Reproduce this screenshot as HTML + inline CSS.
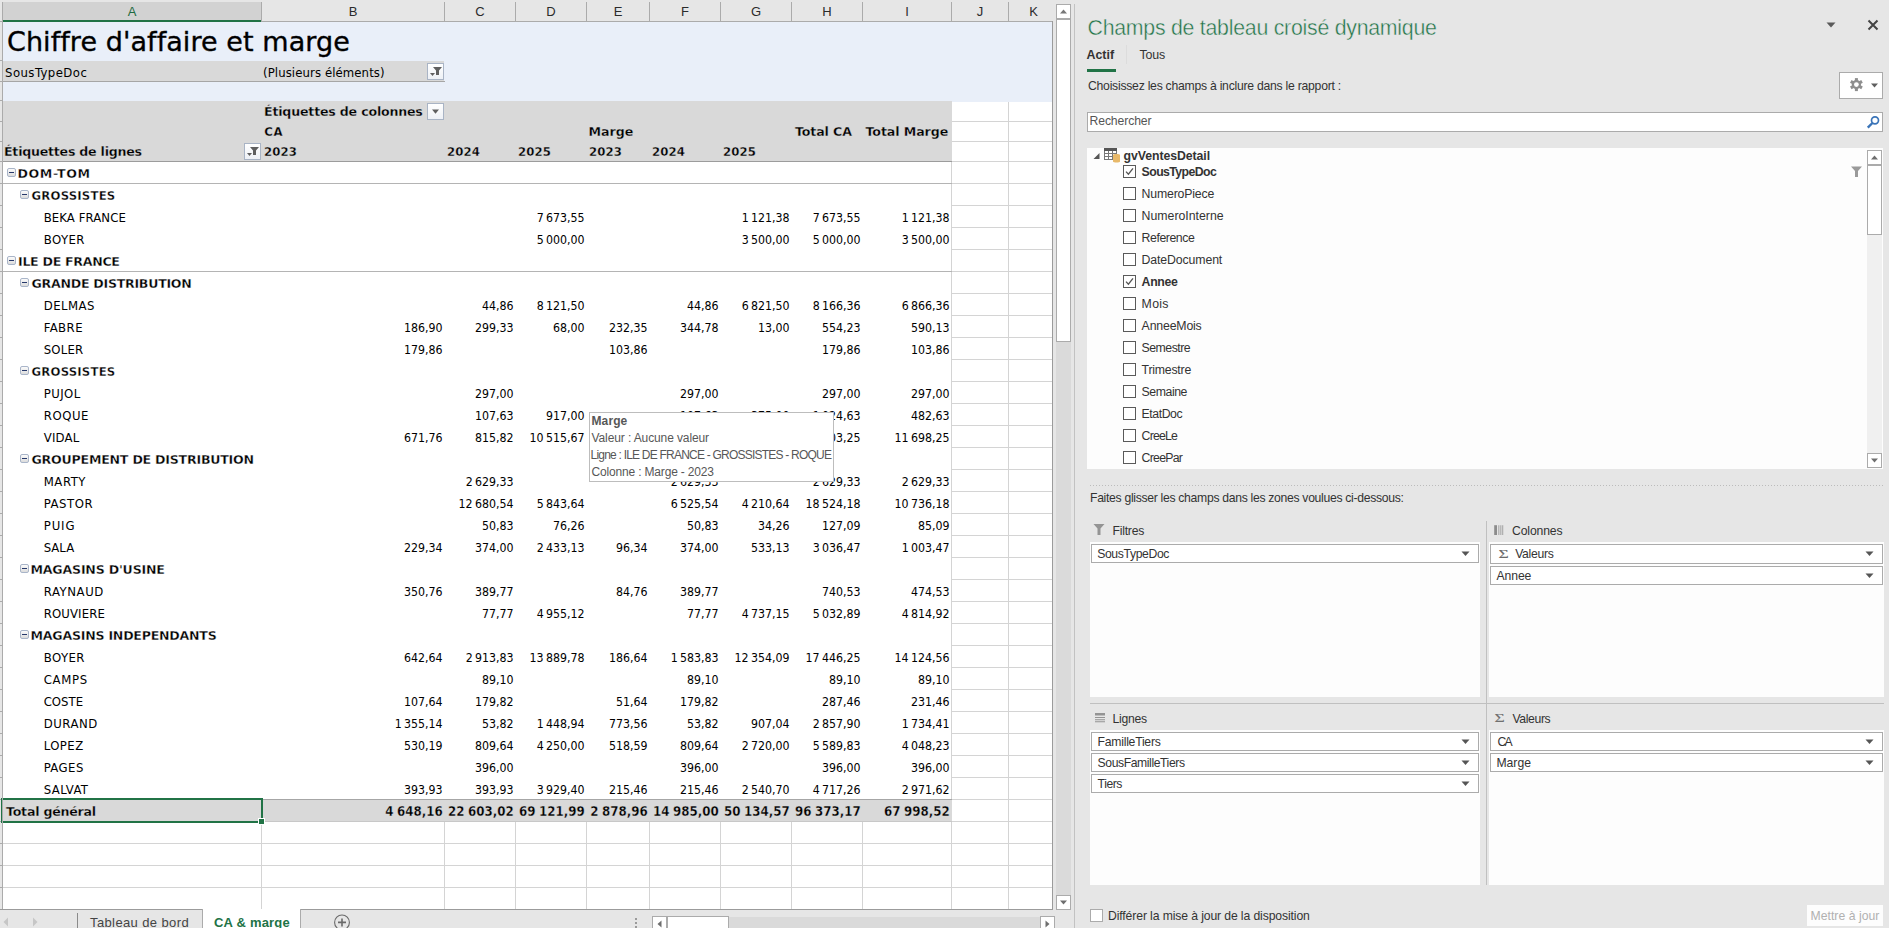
<!DOCTYPE html><html lang="fr"><head><meta charset="utf-8"><title>Chiffre d'affaire et marge</title><style>html,body{margin:0;padding:0}
body{width:1889px;height:928px;overflow:hidden;background:#e6e6e6;font-family:"DejaVu Sans Condensed","DejaVu Sans","Liberation Sans",sans-serif;font-stretch:condensed;font-size:13px;color:#000}
#app{position:relative;width:1889px;height:928px;overflow:hidden;background:#e6e6e6}
#app div,.abs{position:absolute}
#sheet{left:0;top:0;width:1053px;height:910px;background:#fff;overflow:hidden}
.fill.blue{background:#e9eff9}
.fill.gray{background:#d9d9d9}
.hl{height:1px}
.vl{width:1px}
.g{background:#d4d4d4}
#colhdr{left:0;top:0;width:1053px;height:22px;background:#e6e6e6;border-bottom:1px solid #ababab;box-sizing:border-box}
.ch{top:2px;height:19px;text-align:center;color:#2b2b2b;font-size:13px;line-height:20px;font-family:"Liberation Sans",sans-serif}
.ch.sel{background:#d2d2d2;color:#1e6b41;height:18px;border-bottom:2px solid #217346}
.chsep{top:2px;width:1px;height:19px;background:#ababab}
#rowstrip{left:0;top:22px;width:2px;height:888px;background:#e6e6e6}
.t{white-space:pre;height:22px;line-height:22px;font-size:13px}
.t.h20{height:20px;line-height:20px}
.t.h21{height:21px;line-height:21px}
.t.title{font-family:"DejaVu Sans","Liberation Sans",sans-serif;font-stretch:normal;font-size:27px;-webkit-text-stroke:0.35px #000}
.t.b{font-weight:bold;font-size:13px;-webkit-text-stroke:0.3px #fff}
.t.b.bx{font-family:"DejaVu Sans","Liberation Sans",sans-serif;font-stretch:normal;font-size:12.6px}
.t.b.h20,.t.b.gr{-webkit-text-stroke:0.3px #d9d9d9}
.t.n{text-align:right;font-size:12.25px;word-spacing:-1.1px}
.t.nb{text-align:right;font-weight:bold;font-size:13.2px;word-spacing:-0.5px;-webkit-text-stroke:0.3px #d9d9d9}
.fbtn{width:15px;height:15px;border:1px solid #a9b4c5;background:linear-gradient(#fff,#eef1f6);overflow:hidden}
.fbtn svg{position:absolute;left:-1px;top:-1px}
.pm{width:7px;height:7px;border:1px solid #a9b5c9;border-radius:2px;background:linear-gradient(#fbfbfb,#dcdcdc)}
.pm i{position:absolute;left:1px;top:3px;width:5px;height:1px;background:#27396b}
#selbox{left:1px;top:798px;width:258px;height:21px;border:2px solid #217346}
#selhandle{left:258px;top:818px;width:5px;height:5px;background:#217346;border:1px solid #fff}
#tip{left:589px;top:412px;width:243px;height:68px;border:1px solid #bdbdbd;background:#fff;color:#575757;font-family:"Liberation Sans",sans-serif}
.tl{white-space:pre;font-size:12px;line-height:17px;height:17px;color:#575757}
.tl.b{font-weight:bold}
#vsb{left:1056px;top:0;width:15px;height:910px}
.sbtn{background:#fff;border:1px solid #ababab}
.sbtn svg{position:absolute;left:0;top:0}
.track{background:#dadada}
.track2{background:#f0f0f0}
.thumb{background:#fff;border:1px solid #ababab}
#tabbar{left:0;top:910px;width:1074px;height:18px;background:#e6e6e6}
.tab{top:0;height:18px;border-right:1px solid #ababab}
.tab.act{background:#fff;top:-1px;height:19px;border-left:1px solid #ababab;border-right:1px solid #ababab}
.tabt{white-space:pre;font-family:"Liberation Sans",sans-serif;font-size:13px;color:#444;line-height:18px;height:18px;top:0}
.tabt.act{color:#217346;font-weight:bold}
.dots{width:2px;height:12px;background:repeating-linear-gradient(#9a9a9a 0 2px,transparent 2px 4px)}
#pane{left:0;top:0;width:1889px;height:928px;font-family:"Liberation Sans",sans-serif;color:#3b3b3b}
.ptitle{font-size:21.3px;color:#217346;-webkit-text-stroke:0.42px #e6e6e6;white-space:pre;line-height:28px}
.pt{white-space:pre;font-size:12.2px;line-height:16px;color:#333}
.pt.f12{font-size:12.3px}
.pt.b{font-weight:bold}
.pt.ptab{font-size:12.4px}
.pt.srch{color:#555}
.pt.updt{color:#b1b1b1}
.gear{width:42px;height:25px;background:#fff;border:1px solid #ababab}
.search{background:#fff;border:1px solid #ababab}
.white{background:#fdfdfd}
.cb{width:11px;height:11px;border:1px solid #5a5a5a;background:#fff}
.cb svg{position:absolute;left:0;top:0}
.dotline{height:1px;background:repeating-linear-gradient(90deg,#bcbcbc 0 1px,transparent 1px 3px)}
.zi{height:17px;border:1px solid #ababab;background:#fff}
.zi .sig2{position:absolute;left:8px;top:0;font-family:"Liberation Serif",serif;font-size:16px;line-height:18px;color:#6a6a6a;-webkit-text-stroke:0.12px #6a6a6a;transform:scale(1.1,0.84);transform-origin:50% 55%}
.sig{font-family:"Liberation Serif",serif;font-size:16px;color:#707070;-webkit-text-stroke:0.12px #707070;transform:scale(1.1,0.82);transform-origin:50% 50%}
.upd{background:#fdfdfd}
</style></head><body>
<div id="app">
<div id="sheet">
<div class="fill blue" style="left:3px;top:22px;width:1049px;height:79px"></div>
<div class="fill gray" style="left:3px;top:61px;width:441px;height:20px"></div>
<div class="hl" style="left:3px;top:81px;width:442px;background:#a6a6a6"></div>
<div class="fill gray" style="left:3px;top:101px;width:949px;height:60px"></div>
<div class="hl" style="left:3px;top:161px;width:949px;background:#9c9c9c"></div>
<div class="hl g" style="left:952px;top:121px;width:100px"></div>
<div class="hl g" style="left:952px;top:141px;width:100px"></div>
<div class="hl g" style="left:952px;top:161px;width:100px"></div>
<div class="hl g" style="left:952px;top:183px;width:100px"></div>
<div class="hl g" style="left:952px;top:205px;width:100px"></div>
<div class="hl g" style="left:952px;top:227px;width:100px"></div>
<div class="hl g" style="left:952px;top:249px;width:100px"></div>
<div class="hl g" style="left:952px;top:271px;width:100px"></div>
<div class="hl g" style="left:952px;top:293px;width:100px"></div>
<div class="hl g" style="left:952px;top:315px;width:100px"></div>
<div class="hl g" style="left:952px;top:337px;width:100px"></div>
<div class="hl g" style="left:952px;top:359px;width:100px"></div>
<div class="hl g" style="left:952px;top:381px;width:100px"></div>
<div class="hl g" style="left:952px;top:403px;width:100px"></div>
<div class="hl g" style="left:952px;top:425px;width:100px"></div>
<div class="hl g" style="left:952px;top:447px;width:100px"></div>
<div class="hl g" style="left:952px;top:469px;width:100px"></div>
<div class="hl g" style="left:952px;top:491px;width:100px"></div>
<div class="hl g" style="left:952px;top:513px;width:100px"></div>
<div class="hl g" style="left:952px;top:535px;width:100px"></div>
<div class="hl g" style="left:952px;top:557px;width:100px"></div>
<div class="hl g" style="left:952px;top:579px;width:100px"></div>
<div class="hl g" style="left:952px;top:601px;width:100px"></div>
<div class="hl g" style="left:952px;top:623px;width:100px"></div>
<div class="hl g" style="left:952px;top:645px;width:100px"></div>
<div class="hl g" style="left:952px;top:667px;width:100px"></div>
<div class="hl g" style="left:952px;top:689px;width:100px"></div>
<div class="hl g" style="left:952px;top:711px;width:100px"></div>
<div class="hl g" style="left:952px;top:733px;width:100px"></div>
<div class="hl g" style="left:952px;top:755px;width:100px"></div>
<div class="hl g" style="left:952px;top:777px;width:100px"></div>
<div class="hl g" style="left:952px;top:799px;width:100px"></div>
<div class="hl g" style="left:952px;top:821px;width:100px"></div>
<div class="hl g" style="left:952px;top:843px;width:100px"></div>
<div class="hl g" style="left:952px;top:865px;width:100px"></div>
<div class="hl g" style="left:952px;top:887px;width:100px"></div>
<div class="vl g" style="left:951px;top:162px;height:747px"></div>
<div class="vl g" style="left:1008px;top:102px;height:807px"></div>
<div class="fill blue" style="left:952px;top:101px;width:100px;height:1px"></div>
<div class="hl g" style="left:3px;top:843px;width:949px"></div>
<div class="hl g" style="left:3px;top:865px;width:949px"></div>
<div class="hl g" style="left:3px;top:887px;width:949px"></div>
<div class="vl g" style="left:261px;top:822px;height:87px"></div>
<div class="vl g" style="left:444px;top:822px;height:87px"></div>
<div class="vl g" style="left:515px;top:822px;height:87px"></div>
<div class="vl g" style="left:586px;top:822px;height:87px"></div>
<div class="vl g" style="left:649px;top:822px;height:87px"></div>
<div class="vl g" style="left:720px;top:822px;height:87px"></div>
<div class="vl g" style="left:791px;top:822px;height:87px"></div>
<div class="vl g" style="left:862px;top:822px;height:87px"></div>
<div class="fill gray" style="left:3px;top:800px;width:949px;height:21px"></div>
<div class="hl" style="left:3px;top:799px;width:949px;background:#a6a6a6"></div>
<div class="hl" style="left:3px;top:821px;width:949px;background:#c8c8c8"></div>
<div class="hl" style="left:3px;top:183px;width:949px;background:#b4b4b4"></div>
<div class="hl" style="left:3px;top:271px;width:949px;background:#b4b4b4"></div>
<div id="colhdr">
<div class="ch sel" style="left:3px;width:258px"><span>A</span></div>
<div class="chsep" style="left:261px"></div>
<div class="ch" style="left:262px;width:182px"><span>B</span></div>
<div class="chsep" style="left:444px"></div>
<div class="ch" style="left:445px;width:70px"><span>C</span></div>
<div class="chsep" style="left:515px"></div>
<div class="ch" style="left:516px;width:70px"><span>D</span></div>
<div class="chsep" style="left:586px"></div>
<div class="ch" style="left:587px;width:62px"><span>E</span></div>
<div class="chsep" style="left:649px"></div>
<div class="ch" style="left:650px;width:70px"><span>F</span></div>
<div class="chsep" style="left:720px"></div>
<div class="ch" style="left:721px;width:70px"><span>G</span></div>
<div class="chsep" style="left:791px"></div>
<div class="ch" style="left:792px;width:70px"><span>H</span></div>
<div class="chsep" style="left:862px"></div>
<div class="ch" style="left:863px;width:88px"><span>I</span></div>
<div class="chsep" style="left:951px"></div>
<div class="ch" style="left:952px;width:56px"><span>J</span></div>
<div class="chsep" style="left:1008px"></div>
<div class="ch" style="left:1009px;width:43px;padding-left:3px"><span>K</span></div>
</div>
<div id="rowstrip"></div>
<div class="hl" style="left:0;top:21px;width:2px;background:#ababab"></div>
<div class="hl" style="left:0;top:60px;width:2px;background:#ababab"></div>
<div class="hl" style="left:0;top:81px;width:2px;background:#ababab"></div>
<div class="hl" style="left:0;top:100px;width:2px;background:#ababab"></div>
<div class="hl" style="left:0;top:121px;width:2px;background:#ababab"></div>
<div class="hl" style="left:0;top:141px;width:2px;background:#ababab"></div>
<div class="hl" style="left:0;top:161px;width:2px;background:#ababab"></div>
<div class="hl" style="left:0;top:183px;width:2px;background:#ababab"></div>
<div class="hl" style="left:0;top:205px;width:2px;background:#ababab"></div>
<div class="hl" style="left:0;top:227px;width:2px;background:#ababab"></div>
<div class="hl" style="left:0;top:249px;width:2px;background:#ababab"></div>
<div class="hl" style="left:0;top:271px;width:2px;background:#ababab"></div>
<div class="hl" style="left:0;top:293px;width:2px;background:#ababab"></div>
<div class="hl" style="left:0;top:315px;width:2px;background:#ababab"></div>
<div class="hl" style="left:0;top:337px;width:2px;background:#ababab"></div>
<div class="hl" style="left:0;top:359px;width:2px;background:#ababab"></div>
<div class="hl" style="left:0;top:381px;width:2px;background:#ababab"></div>
<div class="hl" style="left:0;top:403px;width:2px;background:#ababab"></div>
<div class="hl" style="left:0;top:425px;width:2px;background:#ababab"></div>
<div class="hl" style="left:0;top:447px;width:2px;background:#ababab"></div>
<div class="hl" style="left:0;top:469px;width:2px;background:#ababab"></div>
<div class="hl" style="left:0;top:491px;width:2px;background:#ababab"></div>
<div class="hl" style="left:0;top:513px;width:2px;background:#ababab"></div>
<div class="hl" style="left:0;top:535px;width:2px;background:#ababab"></div>
<div class="hl" style="left:0;top:557px;width:2px;background:#ababab"></div>
<div class="hl" style="left:0;top:579px;width:2px;background:#ababab"></div>
<div class="hl" style="left:0;top:601px;width:2px;background:#ababab"></div>
<div class="hl" style="left:0;top:623px;width:2px;background:#ababab"></div>
<div class="hl" style="left:0;top:645px;width:2px;background:#ababab"></div>
<div class="hl" style="left:0;top:667px;width:2px;background:#ababab"></div>
<div class="hl" style="left:0;top:689px;width:2px;background:#ababab"></div>
<div class="hl" style="left:0;top:711px;width:2px;background:#ababab"></div>
<div class="hl" style="left:0;top:733px;width:2px;background:#ababab"></div>
<div class="hl" style="left:0;top:755px;width:2px;background:#ababab"></div>
<div class="hl" style="left:0;top:777px;width:2px;background:#ababab"></div>
<div class="hl" style="left:0;top:799px;width:2px;background:#ababab"></div>
<div class="hl" style="left:0;top:821px;width:2px;background:#ababab"></div>
<div class="hl" style="left:0;top:843px;width:2px;background:#ababab"></div>
<div class="hl" style="left:0;top:865px;width:2px;background:#ababab"></div>
<div class="hl" style="left:0;top:887px;width:2px;background:#ababab"></div>
<div id="t1" class="t title" style="left:7.00px;top:22px;letter-spacing:0.071px;height:39px;line-height:39px;">Chiffre d&#x27;affaire et marge</div>
<div id="t2" class="t r h21" style="left:5.00px;top:62px;letter-spacing:0.450px;">SousTypeDoc</div>
<div id="t3" class="t r h21" style="left:263.00px;top:62px;letter-spacing:0.096px;">(Plusieurs éléments)</div>
<div id="t4" class="t b h20 bx" style="left:264.00px;top:102px;letter-spacing:-0.193px;">Étiquettes de colonnes</div>
<div id="t5" class="t b h20" style="left:264.30px;top:122px;letter-spacing:0.5px;">CA</div>
<div id="t6" class="t b h20 bx" style="left:588.50px;top:122px;letter-spacing:-0.000px;">Marge</div>
<div id="t7" class="t b h20 bx" style="left:795.00px;top:122px;letter-spacing:-0.129px;">Total CA</div>
<div id="t8" class="t b h20 bx" style="left:865.50px;top:122px;letter-spacing:-0.090px;">Total Marge</div>
<div id="t9" class="t b h20 bx" style="left:4.00px;top:142px;letter-spacing:-0.236px;">Étiquettes de lignes</div>
<div id="t10" class="t b h20" style="left:264.00px;top:142px;letter-spacing:0.150px;">2023</div>
<div id="t11" class="t b h20" style="left:447.00px;top:142px;letter-spacing:0.150px;">2024</div>
<div id="t12" class="t b h20" style="left:518.00px;top:142px;letter-spacing:0.150px;">2025</div>
<div id="t13" class="t b h20" style="left:589.00px;top:142px;letter-spacing:0.150px;">2023</div>
<div id="t14" class="t b h20" style="left:652.00px;top:142px;letter-spacing:0.150px;">2024</div>
<div id="t15" class="t b h20" style="left:723.00px;top:142px;letter-spacing:0.150px;">2025</div>
<div class="fbtn" style="left:427px;top:63px"><svg width="17" height="17" viewBox="0 0 17 17"><path d="M6 4h9l-3 3.6V12h-3V7.6z" fill="#5f5f5f"/><path d="M3 10h5l-2.5 3z" fill="#5f5f5f"/></svg></div>
<div class="fbtn" style="left:427px;top:103px"><svg width="17" height="17" viewBox="0 0 17 17"><path d="M5 6.6h7l-3.5 4.2z" fill="#5f5f5f"/></svg></div>
<div class="fbtn" style="left:244px;top:143px"><svg width="17" height="17" viewBox="0 0 17 17"><path d="M6 4h9l-3 3.6V12h-3V7.6z" fill="#5f5f5f"/><path d="M3 10h5l-2.5 3z" fill="#5f5f5f"/></svg></div>
<div class="pm" style="left:7px;top:168px"><i></i></div>
<div id="t16" class="t b bx" style="left:17.50px;top:163px;letter-spacing:0.600px;">DOM-TOM</div>
<div class="pm" style="left:20px;top:190px"><i></i></div>
<div id="t17" class="t b" style="left:31.50px;top:185px;letter-spacing:0.200px;">GROSSISTES</div>
<div id="t18" class="t r" style="left:43.70px;top:207px;letter-spacing:0.090px;">BEKA FRANCE</div>
<div class="t n" style="left:516px;width:68.6px;top:207px">7 673,55</div>
<div class="t n" style="left:721px;width:68.6px;top:207px">1 121,38</div>
<div class="t n" style="left:792px;width:68.6px;top:207px">7 673,55</div>
<div class="t n" style="left:863px;width:86.6px;top:207px">1 121,38</div>
<div id="t19" class="t r" style="left:43.70px;top:229px;letter-spacing:0.450px;">BOYER</div>
<div class="t n" style="left:516px;width:68.6px;top:229px">5 000,00</div>
<div class="t n" style="left:721px;width:68.6px;top:229px">3 500,00</div>
<div class="t n" style="left:792px;width:68.6px;top:229px">5 000,00</div>
<div class="t n" style="left:863px;width:86.6px;top:229px">3 500,00</div>
<div class="pm" style="left:7px;top:256px"><i></i></div>
<div id="t20" class="t b bx" style="left:18.00px;top:251px;letter-spacing:-0.300px;">ILE DE FRANCE</div>
<div class="pm" style="left:20px;top:278px"><i></i></div>
<div id="t21" class="t b bx" style="left:31.50px;top:273px;letter-spacing:-0.275px;">GRANDE DISTRIBUTION</div>
<div id="t22" class="t r" style="left:43.70px;top:295px;letter-spacing:0.450px;">DELMAS</div>
<div class="t n" style="left:445px;width:68.6px;top:295px">44,86</div>
<div class="t n" style="left:516px;width:68.6px;top:295px">8 121,50</div>
<div class="t n" style="left:650px;width:68.6px;top:295px">44,86</div>
<div class="t n" style="left:721px;width:68.6px;top:295px">6 821,50</div>
<div class="t n" style="left:792px;width:68.6px;top:295px">8 166,36</div>
<div class="t n" style="left:863px;width:86.6px;top:295px">6 866,36</div>
<div id="t23" class="t r" style="left:43.70px;top:317px;letter-spacing:0.450px;">FABRE</div>
<div class="t n" style="left:262px;width:180.6px;top:317px">186,90</div>
<div class="t n" style="left:445px;width:68.6px;top:317px">299,33</div>
<div class="t n" style="left:516px;width:68.6px;top:317px">68,00</div>
<div class="t n" style="left:587px;width:60.6px;top:317px">232,35</div>
<div class="t n" style="left:650px;width:68.6px;top:317px">344,78</div>
<div class="t n" style="left:721px;width:68.6px;top:317px">13,00</div>
<div class="t n" style="left:792px;width:68.6px;top:317px">554,23</div>
<div class="t n" style="left:863px;width:86.6px;top:317px">590,13</div>
<div id="t24" class="t r" style="left:43.70px;top:339px;letter-spacing:0.225px;">SOLER</div>
<div class="t n" style="left:262px;width:180.6px;top:339px">179,86</div>
<div class="t n" style="left:587px;width:60.6px;top:339px">103,86</div>
<div class="t n" style="left:792px;width:68.6px;top:339px">179,86</div>
<div class="t n" style="left:863px;width:86.6px;top:339px">103,86</div>
<div class="pm" style="left:20px;top:366px"><i></i></div>
<div id="t25" class="t b" style="left:31.50px;top:361px;letter-spacing:0.200px;">GROSSISTES</div>
<div id="t26" class="t r" style="left:43.70px;top:383px;letter-spacing:0.450px;">PUJOL</div>
<div class="t n" style="left:445px;width:68.6px;top:383px">297,00</div>
<div class="t n" style="left:650px;width:68.6px;top:383px">297,00</div>
<div class="t n" style="left:792px;width:68.6px;top:383px">297,00</div>
<div class="t n" style="left:863px;width:86.6px;top:383px">297,00</div>
<div id="t27" class="t r" style="left:43.70px;top:405px;letter-spacing:0.565px;">ROQUE</div>
<div class="t n" style="left:445px;width:68.6px;top:405px">107,63</div>
<div class="t n" style="left:516px;width:68.6px;top:405px">917,00</div>
<div class="t n" style="left:650px;width:68.6px;top:405px">107,63</div>
<div class="t n" style="left:721px;width:68.6px;top:405px">375,00</div>
<div class="t n" style="left:792px;width:68.6px;top:405px">1 024,63</div>
<div class="t n" style="left:863px;width:86.6px;top:405px">482,63</div>
<div id="t28" class="t r" style="left:43.70px;top:427px;letter-spacing:0.225px;">VIDAL</div>
<div class="t n" style="left:262px;width:180.6px;top:427px">671,76</div>
<div class="t n" style="left:445px;width:68.6px;top:427px">815,82</div>
<div class="t n" style="left:516px;width:68.6px;top:427px">10 515,67</div>
<div class="t n" style="left:587px;width:60.6px;top:427px">366,76</div>
<div class="t n" style="left:650px;width:68.6px;top:427px">815,82</div>
<div class="t n" style="left:721px;width:68.6px;top:427px">10 515,67</div>
<div class="t n" style="left:792px;width:68.6px;top:427px">12 003,25</div>
<div class="t n" style="left:863px;width:86.6px;top:427px">11 698,25</div>
<div class="pm" style="left:20px;top:454px"><i></i></div>
<div id="t29" class="t b bx" style="left:31.50px;top:449px;letter-spacing:-0.234px;">GROUPEMENT DE DISTRIBUTION</div>
<div id="t30" class="t r" style="left:43.70px;top:471px;letter-spacing:0.560px;">MARTY</div>
<div class="t n" style="left:445px;width:68.6px;top:471px">2 629,33</div>
<div class="t n" style="left:650px;width:68.6px;top:471px">2 629,33</div>
<div class="t n" style="left:792px;width:68.6px;top:471px">2 629,33</div>
<div class="t n" style="left:863px;width:86.6px;top:471px">2 629,33</div>
<div id="t31" class="t r" style="left:43.70px;top:493px;letter-spacing:0.540px;">PASTOR</div>
<div class="t n" style="left:445px;width:68.6px;top:493px">12 680,54</div>
<div class="t n" style="left:516px;width:68.6px;top:493px">5 843,64</div>
<div class="t n" style="left:650px;width:68.6px;top:493px">6 525,54</div>
<div class="t n" style="left:721px;width:68.6px;top:493px">4 210,64</div>
<div class="t n" style="left:792px;width:68.6px;top:493px">18 524,18</div>
<div class="t n" style="left:863px;width:86.6px;top:493px">10 736,18</div>
<div id="t32" class="t r" style="left:43.70px;top:515px;letter-spacing:0.900px;">PUIG</div>
<div class="t n" style="left:445px;width:68.6px;top:515px">50,83</div>
<div class="t n" style="left:516px;width:68.6px;top:515px">76,26</div>
<div class="t n" style="left:650px;width:68.6px;top:515px">50,83</div>
<div class="t n" style="left:721px;width:68.6px;top:515px">34,26</div>
<div class="t n" style="left:792px;width:68.6px;top:515px">127,09</div>
<div class="t n" style="left:863px;width:86.6px;top:515px">85,09</div>
<div id="t33" class="t r" style="left:43.70px;top:537px;letter-spacing:0.000px;">SALA</div>
<div class="t n" style="left:262px;width:180.6px;top:537px">229,34</div>
<div class="t n" style="left:445px;width:68.6px;top:537px">374,00</div>
<div class="t n" style="left:516px;width:68.6px;top:537px">2 433,13</div>
<div class="t n" style="left:587px;width:60.6px;top:537px">96,34</div>
<div class="t n" style="left:650px;width:68.6px;top:537px">374,00</div>
<div class="t n" style="left:721px;width:68.6px;top:537px">533,13</div>
<div class="t n" style="left:792px;width:68.6px;top:537px">3 036,47</div>
<div class="t n" style="left:863px;width:86.6px;top:537px">1 003,47</div>
<div class="pm" style="left:20px;top:564px"><i></i></div>
<div id="t34" class="t b bx" style="left:30.50px;top:559px;letter-spacing:-0.210px;">MAGASINS D&#x27;USINE</div>
<div id="t35" class="t r" style="left:43.70px;top:581px;letter-spacing:0.600px;">RAYNAUD</div>
<div class="t n" style="left:262px;width:180.6px;top:581px">350,76</div>
<div class="t n" style="left:445px;width:68.6px;top:581px">389,77</div>
<div class="t n" style="left:587px;width:60.6px;top:581px">84,76</div>
<div class="t n" style="left:650px;width:68.6px;top:581px">389,77</div>
<div class="t n" style="left:792px;width:68.6px;top:581px">740,53</div>
<div class="t n" style="left:863px;width:86.6px;top:581px">474,53</div>
<div id="t36" class="t r" style="left:43.70px;top:603px;letter-spacing:0.130px;">ROUVIERE</div>
<div class="t n" style="left:445px;width:68.6px;top:603px">77,77</div>
<div class="t n" style="left:516px;width:68.6px;top:603px">4 955,12</div>
<div class="t n" style="left:650px;width:68.6px;top:603px">77,77</div>
<div class="t n" style="left:721px;width:68.6px;top:603px">4 737,15</div>
<div class="t n" style="left:792px;width:68.6px;top:603px">5 032,89</div>
<div class="t n" style="left:863px;width:86.6px;top:603px">4 814,92</div>
<div class="pm" style="left:20px;top:630px"><i></i></div>
<div id="t37" class="t b bx" style="left:30.50px;top:625px;letter-spacing:-0.246px;">MAGASINS INDEPENDANTS</div>
<div id="t38" class="t r" style="left:43.70px;top:647px;letter-spacing:0.450px;">BOYER</div>
<div class="t n" style="left:262px;width:180.6px;top:647px">642,64</div>
<div class="t n" style="left:445px;width:68.6px;top:647px">2 913,83</div>
<div class="t n" style="left:516px;width:68.6px;top:647px">13 889,78</div>
<div class="t n" style="left:587px;width:60.6px;top:647px">186,64</div>
<div class="t n" style="left:650px;width:68.6px;top:647px">1 583,83</div>
<div class="t n" style="left:721px;width:68.6px;top:647px">12 354,09</div>
<div class="t n" style="left:792px;width:68.6px;top:647px">17 446,25</div>
<div class="t n" style="left:863px;width:86.6px;top:647px">14 124,56</div>
<div id="t39" class="t r" style="left:43.70px;top:669px;letter-spacing:0.675px;">CAMPS</div>
<div class="t n" style="left:445px;width:68.6px;top:669px">89,10</div>
<div class="t n" style="left:650px;width:68.6px;top:669px">89,10</div>
<div class="t n" style="left:792px;width:68.6px;top:669px">89,10</div>
<div class="t n" style="left:863px;width:86.6px;top:669px">89,10</div>
<div id="t40" class="t r" style="left:43.70px;top:691px;letter-spacing:-0.000px;">COSTE</div>
<div class="t n" style="left:262px;width:180.6px;top:691px">107,64</div>
<div class="t n" style="left:445px;width:68.6px;top:691px">179,82</div>
<div class="t n" style="left:587px;width:60.6px;top:691px">51,64</div>
<div class="t n" style="left:650px;width:68.6px;top:691px">179,82</div>
<div class="t n" style="left:792px;width:68.6px;top:691px">287,46</div>
<div class="t n" style="left:863px;width:86.6px;top:691px">231,46</div>
<div id="t41" class="t r" style="left:43.70px;top:713px;letter-spacing:0.540px;">DURAND</div>
<div class="t n" style="left:262px;width:180.6px;top:713px">1 355,14</div>
<div class="t n" style="left:445px;width:68.6px;top:713px">53,82</div>
<div class="t n" style="left:516px;width:68.6px;top:713px">1 448,94</div>
<div class="t n" style="left:587px;width:60.6px;top:713px">773,56</div>
<div class="t n" style="left:650px;width:68.6px;top:713px">53,82</div>
<div class="t n" style="left:721px;width:68.6px;top:713px">907,04</div>
<div class="t n" style="left:792px;width:68.6px;top:713px">2 857,90</div>
<div class="t n" style="left:863px;width:86.6px;top:713px">1 734,41</div>
<div id="t42" class="t r" style="left:43.70px;top:735px;letter-spacing:0.450px;">LOPEZ</div>
<div class="t n" style="left:262px;width:180.6px;top:735px">530,19</div>
<div class="t n" style="left:445px;width:68.6px;top:735px">809,64</div>
<div class="t n" style="left:516px;width:68.6px;top:735px">4 250,00</div>
<div class="t n" style="left:587px;width:60.6px;top:735px">518,59</div>
<div class="t n" style="left:650px;width:68.6px;top:735px">809,64</div>
<div class="t n" style="left:721px;width:68.6px;top:735px">2 720,00</div>
<div class="t n" style="left:792px;width:68.6px;top:735px">5 589,83</div>
<div class="t n" style="left:863px;width:86.6px;top:735px">4 048,23</div>
<div id="t43" class="t r" style="left:43.70px;top:757px;letter-spacing:0.450px;">PAGES</div>
<div class="t n" style="left:445px;width:68.6px;top:757px">396,00</div>
<div class="t n" style="left:650px;width:68.6px;top:757px">396,00</div>
<div class="t n" style="left:792px;width:68.6px;top:757px">396,00</div>
<div class="t n" style="left:863px;width:86.6px;top:757px">396,00</div>
<div id="t44" class="t r" style="left:43.70px;top:779px;letter-spacing:0.450px;">SALVAT</div>
<div class="t n" style="left:262px;width:180.6px;top:779px">393,93</div>
<div class="t n" style="left:445px;width:68.6px;top:779px">393,93</div>
<div class="t n" style="left:516px;width:68.6px;top:779px">3 929,40</div>
<div class="t n" style="left:587px;width:60.6px;top:779px">215,46</div>
<div class="t n" style="left:650px;width:68.6px;top:779px">215,46</div>
<div class="t n" style="left:721px;width:68.6px;top:779px">2 540,70</div>
<div class="t n" style="left:792px;width:68.6px;top:779px">4 717,26</div>
<div class="t n" style="left:863px;width:86.6px;top:779px">2 971,62</div>
<div id="t45" class="t b gr bx" style="left:6.00px;top:801px;letter-spacing:-0.225px;">Total général</div>
<div class="t nb" style="left:262px;width:180.8px;top:801px">4 648,16</div>
<div class="t nb" style="left:445px;width:68.8px;top:801px">22 603,02</div>
<div class="t nb" style="left:516px;width:68.8px;top:801px">69 121,99</div>
<div class="t nb" style="left:587px;width:60.8px;top:801px">2 878,96</div>
<div class="t nb" style="left:650px;width:68.8px;top:801px">14 985,00</div>
<div class="t nb" style="left:721px;width:68.8px;top:801px">50 134,57</div>
<div class="t nb" style="left:792px;width:68.8px;top:801px">96 373,17</div>
<div class="t nb" style="left:863px;width:86.8px;top:801px">67 998,52</div>
<div id="selbox"></div><div id="selhandle"></div>
<div id="tip">
<div id="t46" class="tl b" style="left:1.50px;top:0px;letter-spacing:0.110px;">Marge</div>
<div id="t47" class="tl" style="left:1.50px;top:17px;letter-spacing:-0.107px;">Valeur : Aucune valeur</div>
<div id="t48" class="tl" style="left:0.50px;top:34px;letter-spacing:-0.778px;">Ligne : ILE DE FRANCE - GROSSISTES - ROQUE</div>
<div id="t49" class="tl" style="left:1.50px;top:51px;letter-spacing:-0.171px;">Colonne : Marge - 2023</div>
</div>
<div class="vl" style="left:2px;top:2px;height:907px;background:#ababab"></div>
<div class="vl" style="left:1052px;top:21px;height:889px;background:#9b9b9b"></div>
<div class="hl" style="left:0;top:909px;width:1053px;background:#9b9b9b"></div>
</div>
<div id="vsb"><div class="sbtn" style="left:0;top:4px;width:13px;height:13px"><svg width="13" height="13" viewBox="0 0 13 13"><path d="M3 8.5h7L6.5 4.5z" fill="#777"/></svg></div>
<div class="track" style="left:0;top:19px;width:15px;height:876px"></div>
<div class="thumb" style="left:0;top:19px;width:13px;height:321px"></div>
<div class="sbtn" style="left:0;top:895px;width:13px;height:13px"><svg width="13" height="13" viewBox="0 0 13 13"><path d="M3 4.5h7L6.5 8.5z" fill="#6e6e6e"/></svg></div></div>
<div class="vl" style="left:1074px;top:4px;height:924px;background:#c2c2c2"></div>
<div id="tabbar">
<svg class="abs" style="left:3px;top:6px" width="40" height="12" viewBox="0 0 40 12"><path d="M5 1.5v9L0.5 6z" fill="#c6c6c6"/><path d="M30 1.5v9L34.5 6z" fill="#c6c6c6"/></svg>
<div class="vl" style="left:77px;top:3px;height:16px;background:#8a8a8a"></div>
<div class="tab" style="left:78px;width:124px"></div>
<div class="tab act" style="left:202px;width:97px"></div>
<div id="t50" class="tabt" style="left:90.00px;top:4px;letter-spacing:0.385px;">Tableau de bord</div>
<div id="t51" class="tabt act" style="left:214.00px;top:4px;letter-spacing:0.200px;">CA &amp; marge</div>
<svg class="abs" style="left:333px;top:3px" width="18" height="18" viewBox="0 0 18 18"><circle cx="9" cy="9.4" r="7.4" fill="none" stroke="#6a6a6a" stroke-width="1.1"/><path d="M5 9.4h8M9 5.4v8" stroke="#6a6a6a" stroke-width="1.6"/></svg>
<div class="dots" style="left:635px;top:8px"></div>
<div class="track" style="left:652px;top:7px;width:402px;height:13px"></div>
<div class="sbtn" style="left:652px;top:6px;width:13px;height:14px"><svg width="13" height="14" viewBox="0 0 13 14"><path d="M8.5 3.5v7L4.5 7z" fill="#6e6e6e"/></svg></div>
<div class="thumb" style="left:667px;top:6px;width:60px;height:14px"></div>
<div class="sbtn" style="left:1040px;top:6px;width:13px;height:14px"><svg width="13" height="14" viewBox="0 0 13 14"><path d="M4.5 3.5v7L8.5 7z" fill="#6e6e6e"/></svg></div>
</div>
<div id="pane">
<div id="t52" class="ptitle" style="left:1087.50px;top:14px;letter-spacing:-0.247px;">Champs de tableau croisé dynamique</div>
<svg class="abs" style="left:1825px;top:20px" width="12" height="10" viewBox="0 0 12 10"><path d="M1.5 2.5h9L6 7.5z" fill="#5a5a5a"/></svg>
<svg class="abs" style="left:1867px;top:19px" width="12" height="12" viewBox="0 0 12 12"><path d="M1.5 1.5l9 9M10.5 1.5l-9 9" stroke="#444" stroke-width="2"/></svg>
<div id="t53" class="pt ptab b" style="left:1086.50px;top:47px;letter-spacing:-0.000px;">Actif</div>
<div class="abs" style="left:1087px;top:69px;width:29px;height:3px;background:#217346"></div>
<div id="t54" class="pt ptab" style="left:1139.50px;top:47px;letter-spacing:-0.150px;">Tous</div>
<div class="vl" style="left:1126px;top:45px;height:19px;background:#dcdcdc"></div>
<div id="t55" class="pt" style="left:1088.00px;top:78px;letter-spacing:-0.244px;">Choisissez les champs à inclure dans le rapport :</div>
<div class="gear" style="left:1839px;top:72px"><svg width="42" height="25" viewBox="0 0 42 25"><g transform="translate(16.4,11.6)" fill="#8e8e8e"><circle r="4.6"/><rect x="-1.5" y="-6.5" width="3" height="13"/><rect x="-1.5" y="-6.5" width="3" height="13" transform="rotate(60)"/><rect x="-1.5" y="-6.5" width="3" height="13" transform="rotate(120)"/><circle r="2.4" fill="#fff"/></g><path d="M31 10.5h7l-3.5 4z" fill="#5f5f5f"/></svg></div>
<div class="search" style="left:1087px;top:112px;width:794px;height:18px"><svg class="abs" style="right:1.3px;top:2px" width="16" height="15" viewBox="0 0 16 15"><circle cx="10" cy="5.3" r="3.5" fill="none" stroke="#3a74b8" stroke-width="1.7"/><path d="M7.4 8L2.8 12.6" stroke="#3a74b8" stroke-width="2.4"/></svg></div>
<div id="t56" class="pt srch" style="left:1089.50px;top:113px;letter-spacing:-0.1px;">Rechercher</div>
<div class="white" style="left:1087px;top:148px;width:796px;height:321px"></div>
<svg class="abs" style="left:1091px;top:147px" width="30" height="17" viewBox="0 0 30 17"><path d="M2.5 12h6v-6z" fill="#555"/><g stroke="#777" stroke-width="1" fill="#fff"><rect x="13.5" y="2.5" width="12" height="10"/><path d="M13.5 6.5h12M13.5 9.5h12M17.5 2.5v10M21.5 2.5v10" fill="none"/></g><rect x="13" y="1" width="13" height="3" fill="#555"/><path d="M22 8c0-1.4 7-1.4 7 0v6.5c0 1.4-7 1.4-7 0z" fill="#e8b96a"/></svg>
<div id="t57" class="pt b f12" style="left:1123.50px;top:148px;letter-spacing:-0.069px;">gvVentesDetail</div>
<div class="cb" style="left:1123px;top:165px"><svg width="11" height="11" viewBox="0 0 11 11"><path d="M2 5.6l2.4 2.6L9 2.4" fill="none" stroke="#555" stroke-width="1.3"/></svg></div>
<div id="t58" class="pt f12 b" style="left:1141.60px;top:164px;letter-spacing:-0.585px;">SousTypeDoc</div>
<div class="cb" style="left:1123px;top:187px"></div>
<div id="t59" class="pt f12" style="left:1141.60px;top:186px;letter-spacing:-0.180px;">NumeroPiece</div>
<div class="cb" style="left:1123px;top:209px"></div>
<div id="t60" class="pt f12" style="left:1141.60px;top:208px;letter-spacing:0.000px;">NumeroInterne</div>
<div class="cb" style="left:1123px;top:231px"></div>
<div id="t61" class="pt f12" style="left:1141.60px;top:230px;letter-spacing:-0.450px;">Reference</div>
<div class="cb" style="left:1123px;top:253px"></div>
<div id="t62" class="pt f12" style="left:1141.60px;top:252px;letter-spacing:-0.122px;">DateDocument</div>
<div class="cb" style="left:1123px;top:275px"><svg width="11" height="11" viewBox="0 0 11 11"><path d="M2 5.6l2.4 2.6L9 2.4" fill="none" stroke="#555" stroke-width="1.3"/></svg></div>
<div id="t63" class="pt f12 b" style="left:1141.60px;top:274px;letter-spacing:-0.335px;">Annee</div>
<div class="cb" style="left:1123px;top:297px"></div>
<div id="t64" class="pt f12" style="left:1141.60px;top:296px;letter-spacing:0.300px;">Mois</div>
<div class="cb" style="left:1123px;top:319px"></div>
<div id="t65" class="pt f12" style="left:1141.60px;top:318px;letter-spacing:-0.169px;">AnneeMois</div>
<div class="cb" style="left:1123px;top:341px"></div>
<div id="t66" class="pt f12" style="left:1141.60px;top:340px;letter-spacing:-0.514px;">Semestre</div>
<div class="cb" style="left:1123px;top:363px"></div>
<div id="t67" class="pt f12" style="left:1141.60px;top:362px;letter-spacing:-0.225px;">Trimestre</div>
<div class="cb" style="left:1123px;top:385px"></div>
<div id="t68" class="pt f12" style="left:1141.60px;top:384px;letter-spacing:-0.450px;">Semaine</div>
<div class="cb" style="left:1123px;top:407px"></div>
<div id="t69" class="pt f12" style="left:1141.60px;top:406px;letter-spacing:-0.450px;">EtatDoc</div>
<div class="cb" style="left:1123px;top:429px"></div>
<div id="t70" class="pt f12" style="left:1141.60px;top:428px;letter-spacing:-0.810px;">CreeLe</div>
<div class="cb" style="left:1123px;top:451px"></div>
<div id="t71" class="pt f12" style="left:1141.60px;top:450px;letter-spacing:-0.750px;">CreePar</div>
<svg class="abs" style="left:1850px;top:165px" width="13" height="13" viewBox="0 0 13 13"><path d="M1 1.5h11l-4 4.6V12H5V6.1z" fill="#9a9a9a"/></svg>
<div class="track2" style="left:1867px;top:150px;width:15px;height:317px"></div>
<div class="sbtn" style="left:1867px;top:150px;width:13px;height:13px"><svg width="13" height="13" viewBox="0 0 13 13"><path d="M3 8.5h7L6.5 4.5z" fill="#6e6e6e"/></svg></div>
<div class="thumb" style="left:1867px;top:165px;width:13px;height:68px"></div>
<div class="sbtn" style="left:1867px;top:453px;width:13px;height:13px"><svg width="13" height="13" viewBox="0 0 13 13"><path d="M3 4.5h7L6.5 8.5z" fill="#6e6e6e"/></svg></div>
<div class="dotline" style="left:1090px;top:485px;width:794px"></div>
<div id="t72" class="pt" style="left:1090.00px;top:490px;letter-spacing:-0.306px;">Faites glisser les champs dans les zones voulues ci-dessous:</div>
<svg class="abs" style="left:1093.4px;top:523px" width="12" height="12" viewBox="0 0 12 12"><path d="M0.5 1h11l-4 4.6V12h-3V5.6z" fill="#949494"/></svg>
<div id="t73" class="pt" style="left:1112.50px;top:523px;letter-spacing:-0.225px;">Filtres</div>
<div class="white" style="left:1090px;top:542px;width:390px;height:155px"></div>
<svg class="abs" style="left:1494px;top:524px" width="12" height="12" viewBox="0 0 12 12"><path d="M0.2 1.2h2.8v9.8H0.2z" fill="#8c8c8c"/><path d="M4.4 1.2h0.9v9.8H4.4zM6.4 1.2h0.9v9.8H6.4zM8.3 1.2h0.9v9.8H8.3z" fill="#9a9a9a"/></svg>
<div id="t74" class="pt" style="left:1512.00px;top:523px;letter-spacing:-0.129px;">Colonnes</div>
<div class="white" style="left:1489px;top:542px;width:395px;height:155px"></div>
<div class="vl" style="left:1486px;top:521px;height:364px;background:#c0c0c0"></div>
<div class="hl" style="left:1090px;top:703px;width:794px;background:#c0c0c0"></div>
<svg class="abs" style="left:1095px;top:712px" width="12" height="12" viewBox="0 0 12 12"><path d="M0 1h10v2.5H0zM0 5h10v1H0zM0 7.2h10v1H0zM0 9.3h10v1H0z" fill="#949494"/></svg>
<div id="t75" class="pt" style="left:1112.50px;top:711px;letter-spacing:-0.270px;">Lignes</div>
<div class="white" style="left:1090px;top:730px;width:390px;height:155px"></div>
<div class="pt sig" style="left:1495px;top:710px">Σ</div>
<div id="t76" class="pt" style="left:1512.50px;top:711px;letter-spacing:-0.375px;">Valeurs</div>
<div class="white" style="left:1489px;top:730px;width:395px;height:155px"></div>
<div class="zi" style="left:1091px;top:544px;width:386px"><svg class="abs" style="right:8px;top:6px" width="9" height="6" viewBox="0 0 9 6"><path d="M0.5 0.5h8L4.5 5z" fill="#555"/></svg></div>
<div id="t77" class="pt zit" style="left:1097.20px;top:546px;letter-spacing:-0.360px;">SousTypeDoc</div>
<div class="zi" style="left:1490px;top:544px;width:391px;height:18px"><span class="sig2">Σ</span><svg class="abs" style="right:8px;top:6px" width="9" height="6" viewBox="0 0 9 6"><path d="M0.5 0.5h8L4.5 5z" fill="#555"/></svg></div>
<div id="t78" class="pt zit" style="left:1515.20px;top:546px;letter-spacing:-0.300px;">Valeurs</div>
<div class="zi" style="left:1490px;top:566px;width:391px"><svg class="abs" style="right:8px;top:6px" width="9" height="6" viewBox="0 0 9 6"><path d="M0.5 0.5h8L4.5 5z" fill="#555"/></svg></div>
<div id="t79" class="pt zit" style="left:1496.60px;top:568px;letter-spacing:-0.110px;">Annee</div>
<div class="zi" style="left:1091px;top:732px;width:386px"><svg class="abs" style="right:8px;top:6px" width="9" height="6" viewBox="0 0 9 6"><path d="M0.5 0.5h8L4.5 5z" fill="#555"/></svg></div>
<div id="t80" class="pt zit" style="left:1097.60px;top:734px;letter-spacing:-0.245px;">FamilleTiers</div>
<div class="zi" style="left:1091px;top:753px;width:386px"><svg class="abs" style="right:8px;top:6px" width="9" height="6" viewBox="0 0 9 6"><path d="M0.5 0.5h8L4.5 5z" fill="#555"/></svg></div>
<div id="t81" class="pt zit" style="left:1097.60px;top:755px;letter-spacing:-0.420px;">SousFamilleTiers</div>
<div class="zi" style="left:1091px;top:774px;width:386px"><svg class="abs" style="right:8px;top:6px" width="9" height="6" viewBox="0 0 9 6"><path d="M0.5 0.5h8L4.5 5z" fill="#555"/></svg></div>
<div id="t82" class="pt zit" style="left:1097.60px;top:776px;letter-spacing:-0.450px;">Tiers</div>
<div class="zi" style="left:1490px;top:732px;width:391px"><svg class="abs" style="right:8px;top:6px" width="9" height="6" viewBox="0 0 9 6"><path d="M0.5 0.5h8L4.5 5z" fill="#555"/></svg></div>
<div id="t83" class="pt zit" style="left:1497.40px;top:734px;letter-spacing:-1.800px;">CA</div>
<div class="zi" style="left:1490px;top:753px;width:391px"><svg class="abs" style="right:8px;top:6px" width="9" height="6" viewBox="0 0 9 6"><path d="M0.5 0.5h8L4.5 5z" fill="#555"/></svg></div>
<div id="t84" class="pt zit" style="left:1496.40px;top:755px;letter-spacing:-0.000px;">Marge</div>
<div class="cb" style="left:1090px;top:909px;width:11px;height:11px;border-color:#ababab"></div>
<div id="t85" class="pt" style="left:1108.00px;top:908px;letter-spacing:-0.113px;">Différer la mise à jour de la disposition</div>
<div class="upd" style="left:1807px;top:905px;width:76px;height:21px"></div>
<div id="t86" class="pt updt" style="left:1810.50px;top:908px;letter-spacing:0.038px;">Mettre à jour</div>
</div>
</div></body></html>
